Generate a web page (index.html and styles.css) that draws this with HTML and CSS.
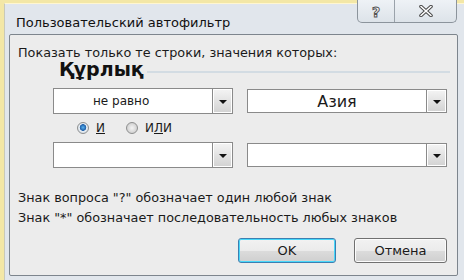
FILE: index.html
```html
<!DOCTYPE html>
<html>
<head>
<meta charset="utf-8">
<link rel="stylesheet" href="styles.css">
</head>
<body>
<div class="window">
  <div class="titlebar">
    <span class="title">Пользовательский автофильтр</span>
    <div class="caption-btns">
      <div class="cbtn help">?</div>
      <div class="cbtn close">
        <svg width="16" height="12" viewBox="0 0 16 12"><path d="M3 1.5 L13 10.5 M13 1.5 L3 10.5" stroke="#4a4a4a" stroke-width="3.6" stroke-linecap="round"/><path d="M3 1.5 L13 10.5 M13 1.5 L3 10.5" stroke="#fff" stroke-width="1.6" stroke-linecap="round"/></svg>
      </div>
    </div>
  </div>
  <div class="panel">
    <div class="intro">Показать только те строки, значения которых:</div>
    <div class="group">
      <span class="group-label">Құрлық</span>
      <span class="group-line"></span>
    </div>
    <div class="row row1">
      <div class="combo left"><span class="val">не равно</span><span class="arrow"></span></div>
      <div class="combo right center"><span class="val">Азия</span><span class="arrow"></span></div>
    </div>
    <div class="radios">
      <label class="radio"><span class="dot on"></span><span><u>И</u></span></label>
      <label class="radio"><span class="dot"></span><span>И<u>Л</u>И</span></label>
    </div>
    <div class="row row2">
      <div class="combo left"><span class="val"></span><span class="arrow"></span></div>
      <div class="combo right"><span class="val"></span><span class="arrow"></span></div>
    </div>
    <div class="hints">
      <div>Знак вопроса "?" обозначает один любой знак</div>
      <div>Знак "*" обозначает последовательность любых знаков</div>
    </div>
    <div class="buttons">
      <div class="btn ok">OK</div>
      <div class="btn">Отмена</div>
    </div>
  </div>
</div>
</body>
</html>
```
FILE: styles.css
```css
html, body { margin: 0; padding: 0; }
body {
  width: 464px; height: 280px; overflow: hidden;
  font-family: "DejaVu Sans", "Noto Sans", sans-serif;
  font-size: 12.8px; color: #1a1a1a;
  background: #f3e7a6;
}
.window {
  box-sizing: border-box;
  margin-left: 4px; margin-top: 3px;
  width: 460px; height: 277px;
  background: #e1e6ec;
  border-left: 1px solid #c9c9b8;
  border-top: 1px solid #fff6d0;
  display: flex; flex-direction: column;
  padding: 0 6px 4px 4px;
}
.titlebar {
  height: 30px; display: flex; align-items: flex-start; justify-content: space-between;
}
.title { font-size: 13px; margin-top: 11px; margin-left: 7px; color: #111; }
.caption-btns {
  display: flex; margin-right: 1px; margin-top: -4px;
  border: 1px solid #8c949c; border-top: none;
  border-radius: 0 0 5px 5px; height: 22px; overflow: hidden;
  background: linear-gradient(#eef2f6, #dde3e9);
}
.cbtn { display: flex; align-items: center; justify-content: center; }
.help {
  width: 37px; border-right: 1px solid #9aa2aa; font-weight: bold; font-size: 14px; color: #fff;
  -webkit-text-stroke: 1px #555; padding-top: 2px; box-sizing: border-box;
}
.close { width: 61px; }
.panel {
  flex: 1; box-sizing: border-box;
  background: #ececec;
  border: 1px solid #7d858d;
  border-radius: 2px;
  display: flex; flex-direction: column;
  padding: 10px 8px 0 8px;
}
.intro { line-height: 16px; }
.group { display: flex; align-items: center; margin-left: 41px; margin-top: -3px; height: 22px; }
.group-label { font-weight: bold; font-size: 19px; line-height: 22px; color: #111; }
.group-line { flex: 1; height: 2px; background: #d3dce3; margin-left: 3px; margin-right: -1px; margin-top: 5px; }
.row { display: flex; align-items: center; padding-left: 35px; }
.row1 { margin-top: 8px; }
.combo {
  box-sizing: border-box; height: 26px; background: #fff;
  border: 1px solid #8a8a8a; display: flex; align-items: stretch;
}
.combo.left { width: 180px; }
.combo.right { width: 200px; margin-left: 14px; height: 24px; }
.val { flex: 1; display: flex; align-items: center; padding-left: 39px; font-size: 12px; }
.combo.right .val { padding-left: 0; justify-content: center; font-size: 16px; }
.arrow {
  width: 20px; box-sizing: border-box;
  border-left: 1px solid #8a8a8a;
  background: linear-gradient(#f4f4f4, #d2d2d2);
  display: flex; align-items: center; justify-content: center;
  box-shadow: inset 0 0 0 1px #fff;
}
.arrow::after {
  content: ""; border-left: 4px solid transparent; border-right: 4px solid transparent;
  border-top: 4px solid #111; margin-top: 1px;
}
.radios { display: flex; padding-left: 59px; height: 28px; align-items: center; gap: 21px; font-size: 12px; }
.radio { display: flex; align-items: center; gap: 7px; }
.dot {
  width: 12px; height: 12px; border-radius: 50%; box-sizing: border-box;
  border: 1px solid #8e8f8f;
  background: radial-gradient(circle, #f4f4f4, #c4c4c4);
}
.dot.on { background: radial-gradient(circle at 50% 45%, #5ab4f0 0, #1d5ea8 3px, #e8eef4 3.6px, #c9d3dc 100%); }
.hints { margin-top: 20px; line-height: 20px; }
.buttons { display: flex; justify-content: flex-end; gap: 18px; margin-top: 10px; padding-right: 2px; }
.btn {
  box-sizing: border-box; height: 25px; width: 93px;
  border: 1px solid #707070; border-radius: 3px;
  background: linear-gradient(#f2f2f2 0%, #ebebeb 50%, #dcdcdc 51%, #cfcfcf 100%);
  display: flex; align-items: center; justify-content: center;
  box-shadow: inset 0 0 0 1px #fcfcfc;
  font-size: 13px;
}
.btn.ok { width: 98px; border-color: #3c7fb1; box-shadow: inset 0 0 0 1px #48d8fa; }
```
